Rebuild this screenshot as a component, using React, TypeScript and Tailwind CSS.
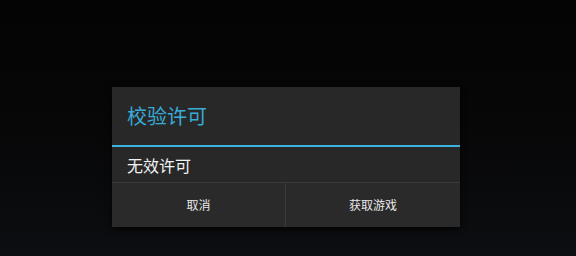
import React from "react";

export default function App() {
  const font = { fontFamily: '"Noto Sans CJK SC", "Noto Sans", sans-serif' };
  return (
    <div
      className="w-[576px] h-[256px] overflow-hidden bg-gradient-to-b from-[#040404] via-[#070708] to-[#0c0e11] pl-[112px] pt-[87px]"
      style={font}
    >
      <div className="w-[348px] h-[140px] bg-[#282828] flex flex-col shadow-[0_2px_6px_rgba(0,0,0,0.8)]">
        <div className="h-[58px] flex items-center px-[15px] text-[20px] leading-none text-[#38acd8]">
          校验许可
        </div>
        <div className="h-[2px] bg-[#3cb4e0]" />
        <div className="h-[35px] flex items-center px-[15px] text-[16px] leading-none text-[#f2f2f2]">
          无效许可
        </div>
        <div className="h-px bg-[#3a3a3a]" />
        <div className="h-[44px] flex">
          <div className="w-[173px] flex items-center justify-center text-[12px] leading-none text-[#e8e8e8] bg-[#2a2a2a]">
            取消
          </div>
          <div className="w-px bg-[#3a3a3a]" />
          <div className="flex-1 flex items-center justify-center text-[12px] leading-none text-[#e8e8e8] bg-[#2a2a2a]">
            获取游戏
          </div>
        </div>
      </div>
    </div>
  );
}
